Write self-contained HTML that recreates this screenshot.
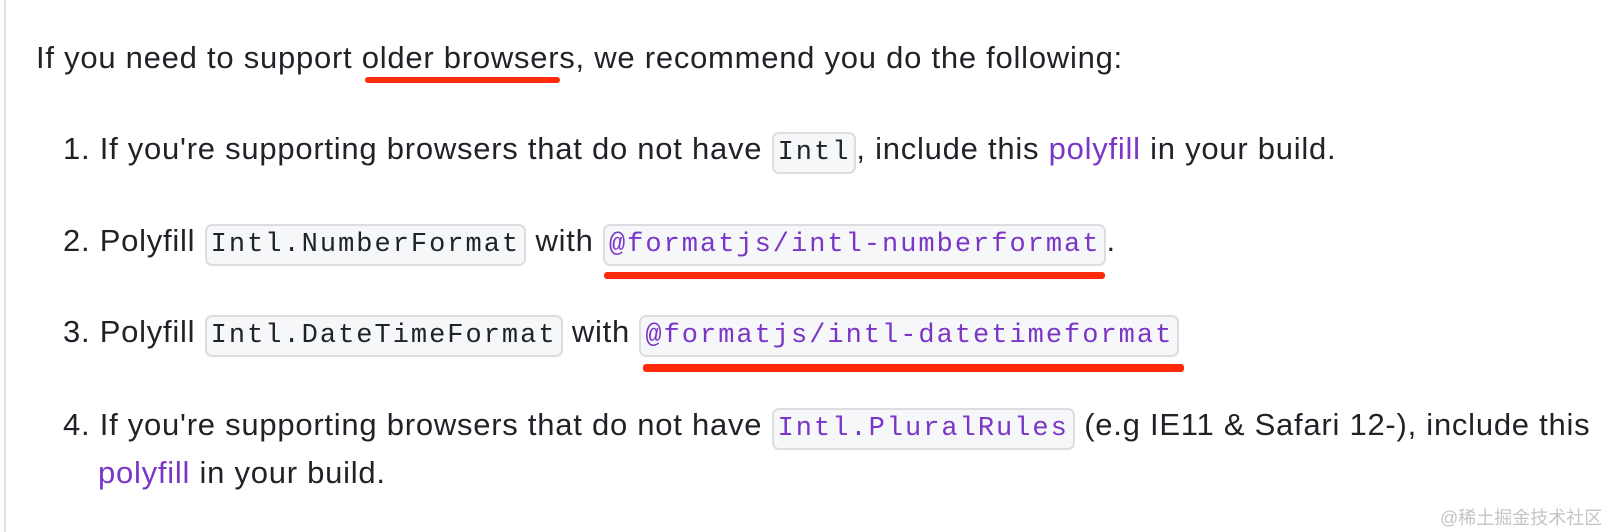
<!DOCTYPE html>
<html><head><meta charset="utf-8"><style>
body{margin:0;width:1608px;height:532px;background:#fff;position:relative;overflow:hidden;font-family:"Liberation Sans",sans-serif;font-size:31px;letter-spacing:0.75px;color:#1f2328;}
.bar{position:absolute;left:4px;top:0;width:2px;height:532px;background:#e3e3e3}
.l{position:absolute;white-space:nowrap;line-height:40px}
code{font-family:"Liberation Mono","DejaVu Sans Mono",monospace;font-size:27px;letter-spacing:2px;background:#f6f7f9;border:2px solid #dcdde0;border-radius:7px;padding:4px 4px;}
.p{color:#7b36c8}
a{color:#7b36c8;text-decoration:none}
.u{position:absolute;height:6px;background:#ff2a0a;border-radius:3px}
.wm{position:absolute;left:1440px;top:504px;font-size:18px;letter-spacing:0;color:#c4c4c4;font-family:"Liberation Sans","Noto Sans CJK SC",sans-serif}
</style></head><body>
<div class="bar"></div>
<div class="l" style="left:36px;top:38px">If you need to support older browsers, we recommend you do the following:</div>
<div class="u" style="left:365px;top:77px;width:195px"></div>
<div class="l" style="left:63px;top:129px">1. If you're supporting browsers that do not have <code>Intl</code>, include this <a>polyfill</a> in your build.</div>
<div class="l" style="left:63px;top:221px">2. Polyfill <code>Intl.NumberFormat</code> with <code class="p">@formatjs/intl-numberformat</code>.</div>
<div class="u" style="left:604px;top:272px;width:501px;height:7px"></div>
<div class="l" style="left:63px;top:312px">3. Polyfill <code>Intl.DateTimeFormat</code> with <code class="p">@formatjs/intl-datetimeformat</code></div>
<div class="u" style="left:643px;top:364px;width:541px;height:8px"></div>
<div class="l" style="left:63px;top:405px">4. If you're supporting browsers that do not have <code class="p">Intl.PluralRules</code> (e.g IE11 &amp; Safari 12-), include this</div>
<div class="l" style="left:98px;top:453px"><a>polyfill</a> in your build.</div>
<div class="wm">@稀土掘金技术社区</div>
</body></html>
